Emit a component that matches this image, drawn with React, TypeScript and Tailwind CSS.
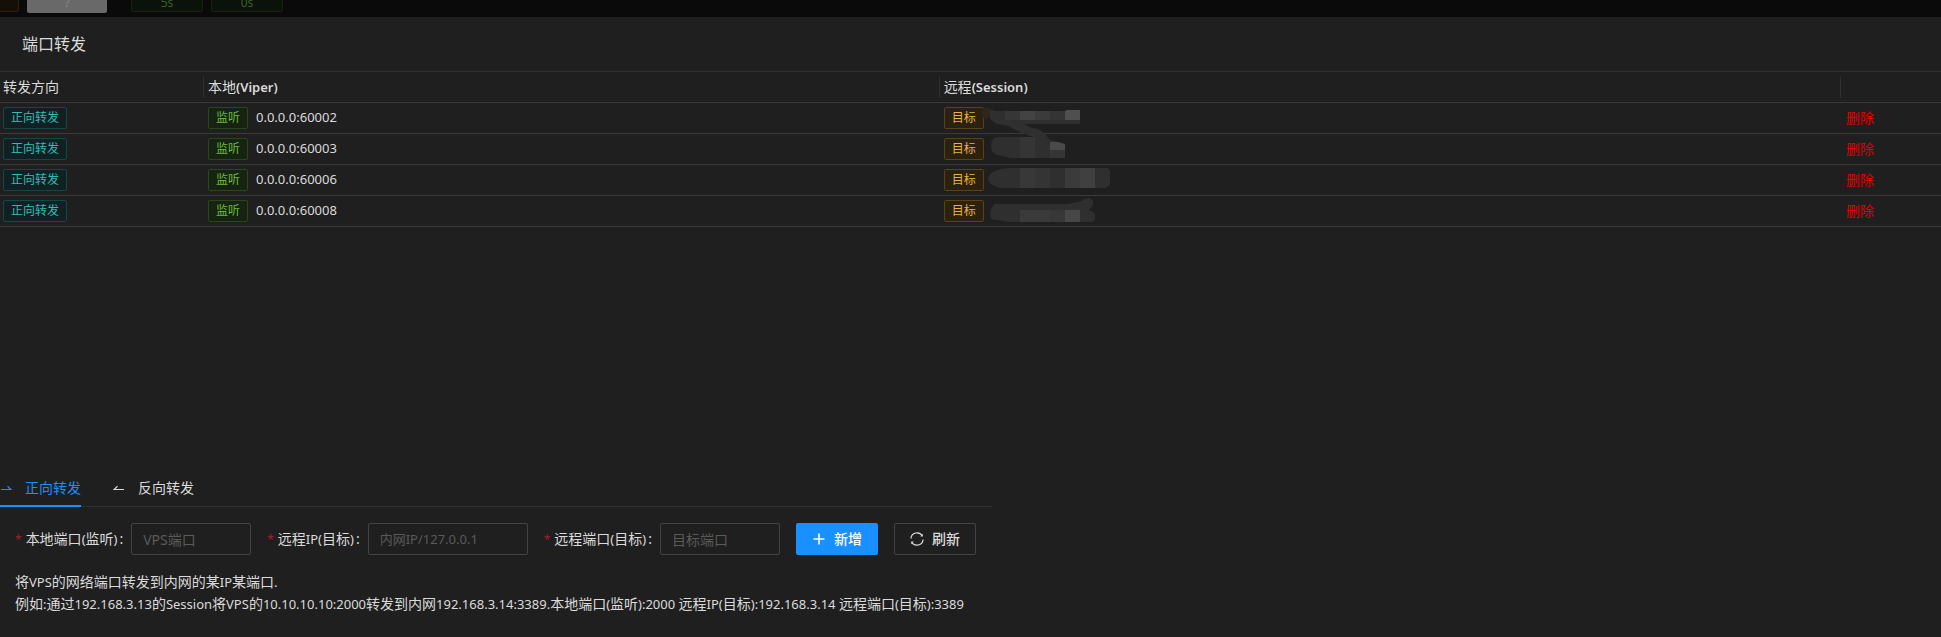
import { FormEvent, useState } from 'react';
import clsx from 'clsx';

type Direction = 'forward' | 'reverse';

interface ForwardRule {
  id: number;
  local: string;
}

const INITIAL_RULES: ForwardRule[] = [
  { id: 1, local: '0.0.0.0:60002' },
  { id: 2, local: '0.0.0.0:60003' },
  { id: 3, local: '0.0.0.0:60006' },
  { id: 4, local: '0.0.0.0:60008' },
];

const TAG_COLORS = {
  cyan: 'border-[#144848] bg-[#112123] text-[#33bcb7]',
  green: 'border-[#274916] bg-[#162312] text-[#6abe39]',
  gold: 'border-[#594214] bg-[#2b2111] text-[#e8b339]',
};

// Latin runs are set one size smaller than the Chinese text around them.
function MixedText({ text }: { text: string }) {
  return text.split(/([\x20-\x7e]+)/).map((part, index) =>
    index % 2 === 1 ? (
      <span key={index} className="text-[13px]">
        {part}
      </span>
    ) : (
      part
    )
  );
}

function Tag({ color, children }: { color: keyof typeof TAG_COLORS; children: string }) {
  return (
    <span className={clsx('mr-2 inline-block rounded-xs border px-[7px] text-xs leading-5', TAG_COLORS[color])}>
      {children}
    </span>
  );
}

// Masked remote addresses, smeared over the four rows of the target column.
function AddressMask() {
  return (
    <svg width="145" height="126" viewBox="0 0 145 126" className="block" aria-hidden="true">
      <defs>
        <clipPath id="mask-strokes">
          <path d="M14 9L20 11H90L92 10H105V24H50Q53 27 58 28Q66 29 70 34L75 40L90 44V58H36L22 55Q16 53 16 46Q16 37 24 37H60Q46 34 34 26L22 24L15 19Z" />
          <path d="M34 68H133L135 71V85L131 88H24Q13 84 13 79Q14 70 34 68Z" />
          <path d="M20 104H93L107 101Q109 98 114 98Q119 99 118 105L114 110Q120 112 120 115V120L117 122H34L16 119Q13 110 20 104Z" />
        </clipPath>
      </defs>
      <ellipse cx="11" cy="13" rx="4" ry="6" fill="#2f2519" />
      <g clipPath="url(#mask-strokes)" shapeRendering="crispEdges">
        <rect width="145" height="126" fill="#2f2f2f" />
        <rect x="30" y="0" width="15" height="20" fill="#363636" />
        <rect x="45" y="0" width="15" height="20" fill="#434343" />
        <rect x="60" y="0" width="15" height="20" fill="#3b3b3b" />
        <rect x="75" y="0" width="15" height="20" fill="#343434" />
        <rect x="90" y="0" width="15" height="20" fill="#4f4f4f" />
        <rect x="45" y="35" width="15" height="23" fill="#353535" />
        <rect x="75" y="42" width="15" height="8" fill="#4a4a4a" />
        <rect x="75" y="50" width="15" height="10" fill="#353535" />
        <rect x="45" y="65" width="15" height="25" fill="#383838" />
        <rect x="60" y="65" width="15" height="25" fill="#343434" />
        <rect x="90" y="65" width="15" height="25" fill="#3b3b3b" />
        <rect x="105" y="65" width="15" height="25" fill="#404040" />
        <rect x="45" y="110" width="30" height="15" fill="#3a3a3a" />
        <rect x="75" y="110" width="15" height="15" fill="#373737" />
        <rect x="90" y="110" width="15" height="15" fill="#474747" />
      </g>
    </svg>
  );
}

function ForwardIcon({ reverse = false }: { reverse?: boolean }) {
  return (
    <svg
      width="12"
      height="14"
      viewBox="0 0 12 14"
      fill="none"
      stroke="currentColor"
      strokeWidth="1.2"
      className={clsx('mr-[13px] shrink-0', reverse && '-scale-x-100')}
      aria-hidden="true"
    >
      <path d="M1 8.5H10.8L7.5 5.2" />
    </svg>
  );
}

function SyncIcon() {
  return (
    <svg width="14" height="14" viewBox="0 0 14 14" fill="none" stroke="currentColor" strokeWidth="1.2" aria-hidden="true">
      <path d="M0.9 6.5A6.1 6.1 0 0 1 12.2 3.8M13.1 7.5A6.1 6.1 0 0 1 1.8 10.2" />
      <path d="M12.8 1.8V4.4H10.3ZM1.2 12.2V9.6H3.7Z" fill="currentColor" stroke="none" />
    </svg>
  );
}

function Field({ id, label, placeholder, size }: { id: string; label: string; placeholder: string; size: string }) {
  return (
    <div className="mr-4 flex items-center">
      <label htmlFor={id} className="mr-2 whitespace-nowrap">
        <span className="mr-1 text-xs text-[#a61d24]">*</span>
        <MixedText text={label} />
        <span className="ml-0.5">:</span>
      </label>
      <input
        id={id}
        placeholder={placeholder}
        className={clsx('h-8 rounded-xs border border-[#434343] bg-transparent px-[11px] outline-none placeholder:text-[#5a5a5a]', size)}
      />
    </div>
  );
}

export default function App() {
  const [rules, setRules] = useState(INITIAL_RULES);
  const [direction, setDirection] = useState<Direction>('forward');

  const onSubmit = (event: FormEvent) => {
    event.preventDefault();
  };

  const removeRule = (id: number) => {
    setRules((current) => current.filter((rule) => rule.id !== id));
  };

  return (
    <div className="flex min-h-screen flex-col bg-[#1f1f1f] font-['Noto_Sans','Noto_Sans_CJK_SC',sans-serif] text-sm text-[#dbdbdb]">
      <div className="flex h-[17px] items-start bg-[#0a0a0a] text-xs leading-3">
        <div className="h-3 w-[19px] rounded-br-xs border-r border-b border-[#2f1f0b] bg-[#150f08]" />
        <div className="ml-2 flex h-[13px] w-20 items-end justify-center rounded-b-xs bg-[#696969] pb-1 text-[#8a8a8a]">?</div>
        <div className="ml-6 flex h-3 w-[72px] items-end justify-center rounded-b-xs border border-t-0 border-[#14250b] bg-[#0b1209] pb-0.5 text-[#35601d]">
          5s
        </div>
        <div className="ml-2 flex h-3 w-[72px] items-end justify-center rounded-b-xs border border-t-0 border-[#14250b] bg-[#0b1209] pb-0.5 text-[#35601d]">
          0s
        </div>
      </div>

      <header className="border-b border-[#303030] px-[22px] py-4">
        <h1 className="text-base leading-[22px]">端口转发</h1>
      </header>

      <div className="relative">
        <table className="w-full table-fixed border-collapse text-left">
          <thead>
            <tr className="h-[30px] border-b border-[#3a3a3a]">
              <th className="w-[204px] p-0 font-normal">
                <div className="border-r border-[#303030] pl-[3px] leading-[22px]">转发方向</div>
              </th>
              <th className="w-[37.9%] p-0 font-normal">
                <div className="border-r border-[#303030] pl-1 leading-[22px]">
                  本地<span className="text-[13px] font-semibold">(Viper)</span>
                </div>
              </th>
              <th className="p-0 font-normal">
                <div className="h-[22px] border-r border-[#303030] pl-1 leading-[22px]">
                  远程<span className="text-[13px] font-semibold">(Session)</span>
                </div>
              </th>
              <th className="w-[100px] p-0" aria-label="操作" />
            </tr>
          </thead>
          <tbody>
            {rules.map((rule) => (
              <tr key={rule.id} className="h-[31px] border-b border-[#3a3a3a]">
                <td className="py-0 pl-[3px]">
                  <Tag color="cyan">正向转发</Tag>
                </td>
                <td className="py-0 pl-1">
                  <Tag color="green">监听</Tag>
                  <span className="text-[13px]">{rule.local}</span>
                </td>
                <td className="py-0 pl-1">
                  <Tag color="gold">目标</Tag>
                </td>
                <td className="py-0 pl-[5px]">
                  <button type="button" onClick={() => removeRule(rule.id)} className="block leading-5 text-[#e00000]">
                    删除
                  </button>
                </td>
              </tr>
            ))}
          </tbody>
        </table>
        <div className="absolute top-7 left-[calc(204px+37.9%+35px)]">
          <AddressMask />
        </div>
      </div>

      <section className="mt-auto w-[992px] max-w-full pb-[22px]">
        <div role="tablist" className="flex gap-8 border-b border-[#303030]">
          {(['forward', 'reverse'] as const).map((key) => (
            <button
              key={key}
              type="button"
              role="tab"
              aria-selected={direction === key}
              onClick={() => setDirection(key)}
              className={clsx(
                '-mb-px flex items-center border-b-2 pt-2 pb-1.5 leading-[22px]',
                direction === key ? 'border-[#1890ff] text-[#1890ff]' : 'border-transparent'
              )}
            >
              <ForwardIcon reverse={key === 'reverse'} />
              {key === 'forward' ? '正向转发' : '反向转发'}
            </button>
          ))}
        </div>

        <form onSubmit={onSubmit} className="mt-4 flex items-center pl-[15px]">
          <Field id="lport" label="本地端口(监听)" placeholder="VPS端口" size="w-[120px]" />
          <Field id="rhost" label="远程IP(目标)" placeholder="内网IP/127.0.0.1" size="w-40 text-[13px]" />
          <Field id="rport" label="远程端口(目标)" placeholder="目标端口" size="w-[120px]" />
          <button
            type="submit"
            className="mr-4 flex h-8 w-[82px] shrink-0 items-center justify-center gap-2 rounded-xs bg-[#1890ff] font-medium text-white"
          >
            <svg width="14" height="14" viewBox="0 0 14 14" stroke="currentColor" strokeWidth="1.6" aria-hidden="true">
              <path d="M7 1.5V12.5M1.5 7H12.5" />
            </svg>
            新增
          </button>
          <button
            type="button"
            className="flex h-8 w-[82px] shrink-0 items-center justify-center gap-2 rounded-xs border border-[#434343] font-medium"
          >
            <SyncIcon />
            刷新
          </button>
        </form>

        <p className="mt-4 pl-[15px] leading-[22px] whitespace-nowrap">
          <MixedText text="将VPS的网络端口转发到内网的某IP某端口." />
          <br />
          <MixedText text="例如:通过192.168.3.13的Session将VPS的10.10.10.10:2000转发到内网192.168.3.14:3389.本地端口(监听):2000 远程IP(目标):192.168.3.14 远程端口(目标):3389" />
        </p>
      </section>
    </div>
  );
}
